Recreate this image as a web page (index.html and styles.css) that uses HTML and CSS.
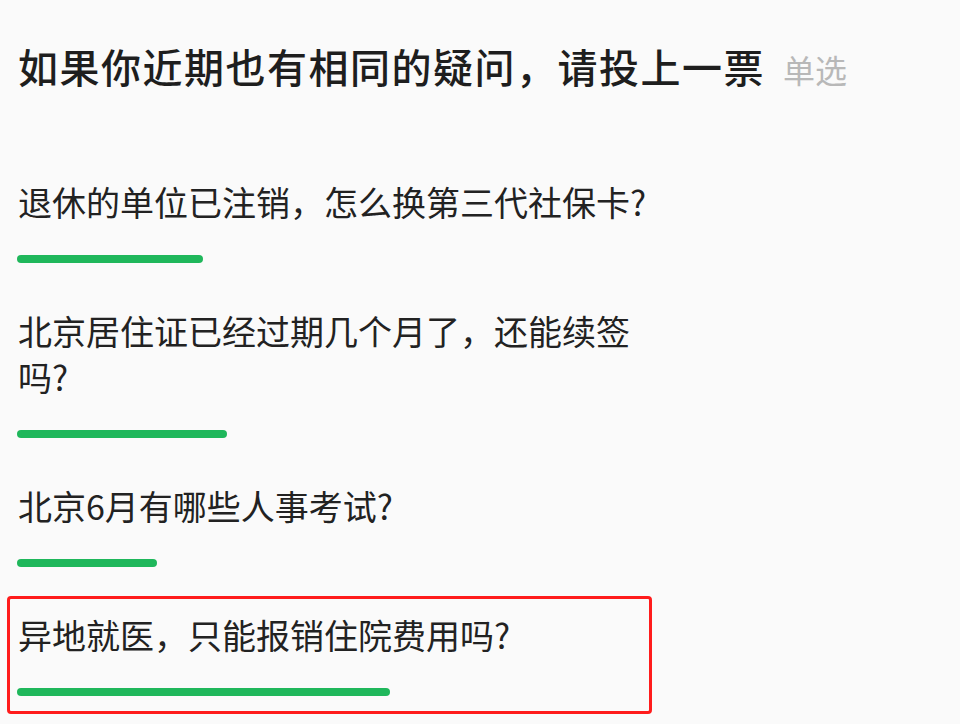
FILE: index.html
```html
<!DOCTYPE html>
<html lang="zh-CN">
<head>
<meta charset="utf-8">
<title>投票</title>
<link rel="stylesheet" href="styles.css">
</head>
<body>
<div class="poll">
  <h1 class="title">如果你近期也有相同的疑问，请投上一票<span class="type">单选</span></h1>
  <ul class="options">
    <li class="option">
      <div class="label">退休的单位已注销，怎么换第三代社保卡?</div>
      <div class="bar" style="width:186px"></div>
    </li>
    <li class="option">
      <div class="label">北京居住证已经过期几个月了，还能续签吗?</div>
      <div class="bar" style="width:210px"></div>
    </li>
    <li class="option">
      <div class="label">北京6月有哪些人事考试?</div>
      <div class="bar" style="width:140px"></div>
    </li>
    <li class="option selected">
      <div class="label">异地就医，只能报销住院费用吗?</div>
      <div class="bar" style="width:373px"></div>
    </li>
  </ul>
</div>
</body>
</html>
```
FILE: styles.css
```css
html, body {
  margin: 0;
  padding: 0;
  background: #fafafa;
}
body {
  font-family: "Noto Sans CJK SC", "Noto Sans", sans-serif;
  color: #222;
  width: 960px;
  height: 724px;
  overflow: hidden;
}
.poll {
  padding: 38px 0 0 18px;
}
.title {
  margin: 0;
  font-size: 40px;
  line-height: 56px;
  font-weight: 500;
  letter-spacing: 1.5px;
  color: #1e1e1e;
  white-space: nowrap;
}
.type {
  font-size: 32px;
  font-weight: 400;
  color: #b8b8b8;
  margin-left: 18px;
  letter-spacing: 0;
}
.options {
  list-style: none;
  margin: 66px 0 0 -11px;
  padding: 0;
  display: flex;
  flex-direction: column;
  gap: 11px;
}
.option {
  width: 631px;
  padding: 13px 0 15px 8px;
  border: 3px solid transparent;
  border-radius: 4px;
}
.option.selected {
  border-color: #ff1c1c;
}
.label {
  font-size: 34px;
  line-height: 46px;
  font-weight: 400;
  color: #222;
}
.bar {
  height: 8px;
  margin-top: 30px;
  margin-left: -1px;
  border-radius: 4px;
  background: #1fb75b;
}
```
